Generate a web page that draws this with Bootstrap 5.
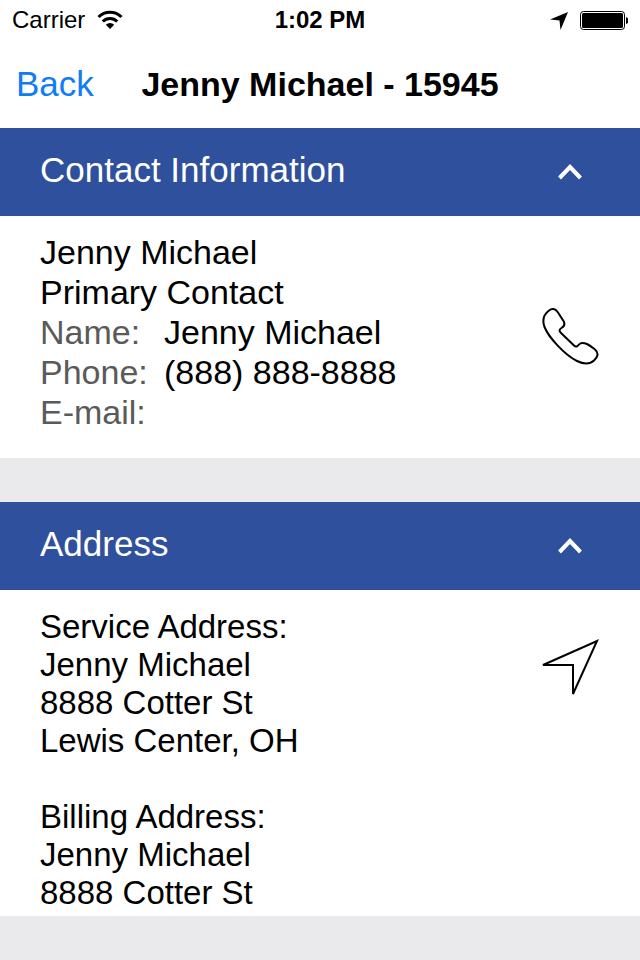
<!DOCTYPE html>
<html lang="en">
<head>
<meta charset="utf-8">
<meta name="viewport" content="width=device-width, initial-scale=1">
<title>Jenny Michael - 15945</title>
<link href="https://cdn.jsdelivr.net/npm/bootstrap@5.3.0/dist/css/bootstrap.min.css" rel="stylesheet">
<style>
  body { font-family: "Liberation Sans", Arial, sans-serif; font-size: 34px; line-height: 40px; color: #000; background: #eaeaec; }
  svg { display: block; flex: none; }
  .status-bar { height: 40px; font-size: 24px; line-height: 40px; padding: 0 12px; }
  .title-bar { height: 88px; padding: 0 16px; }
  .title-text { font-size: 34px; line-height: 40px; }
  .back-link { color: #107cf6; font-size: 35px; }
  .section-toggle { height: 88px; padding: 0 58px 4px 40px; background: #2f509c; color: #fff; border: 0; font-size: 35px; text-align: left; }
  .section-toggle svg { margin-top: 4px; }
  .contact-body { padding: 16px 40px 26px; }
  .contact-body .icon-button { margin-top: 8px; }
  .contact-label { width: 124px; color: #5a5a5a; }
  .address-body { padding: 18px 40px 4px; font-size: 33px; line-height: 38px; }
  .address-body .icon-button { margin-top: 31px; }
  .icon-button { background: none; border: 0; padding: 0; color: #000; }
  .section-gap { margin-top: 44px; }
</style>
<script src="https://cdn.jsdelivr.net/npm/bootstrap@5.3.0/dist/js/bootstrap.bundle.min.js" defer></script>
</head>
<body>
<header class="bg-white">
  <div class="status-bar d-flex align-items-center">
    <div class="col d-flex align-items-center gap-2">
      <span>Carrier</span>
      <svg class="ms-1" width="26" height="20" viewBox="0 0 26 20" aria-hidden="true">
        <g fill="none" stroke="#000" stroke-width="3"><path d="M1.500 7a16.200 16.200 0 0 1 23 0"/><path d="M5.800 11.500a10.200 10.200 0 0 1 14.400 0"/></g>
        <path d="M13 19l-4.200-4.300a6 6 0 0 1 8.400 0z"/>
      </svg>
    </div>
    <span class="fw-bold">1:02 PM</span>
    <div class="col d-flex align-items-center justify-content-end">
      <svg width="78" height="20" viewBox="0 0 78 20" aria-hidden="true">
        <path d="M0 9.500L18 2 10.500 20 9.500 10.500z"/>
        <rect x="30.500" y="1.500" width="44" height="18" rx="3" fill="none" stroke="#000"/>
        <rect x="32" y="3" width="41" height="15" rx="1.500"/>
        <path d="M76 7q2.500 1 2.500 3.500t-2.500 3.500z"/>
      </svg>
    </div>
  </div>
  <nav class="title-bar d-flex align-items-center" aria-label="Page">
    <div class="col"><a href="#" class="back-link text-decoration-none">Back</a></div>
    <h1 class="title-text fw-bold m-0">Jenny Michael - 15945</h1>
    <div class="col"></div>
  </nav>
</header>
<main>
  <section>
    <button type="button" class="section-toggle w-100 d-flex align-items-center justify-content-between" data-bs-toggle="collapse" data-bs-target="#contact" aria-expanded="true" aria-controls="contact">
      <span>Contact Information</span>
      <svg width="24" height="16" viewBox="0 0 24 16" aria-hidden="true"><path d="M1.500 14L12 3l10.500 11" fill="none" stroke="#fff" stroke-width="4"/></svg>
    </button>
    <div id="contact" class="collapse show bg-white">
      <div class="contact-body d-flex justify-content-between align-items-center">
        <div>
          <div>Jenny Michael</div>
          <div>Primary Contact</div>
          <div class="d-flex"><span class="contact-label">Name:</span><span>Jenny Michael</span></div>
          <div class="d-flex"><span class="contact-label">Phone:</span><span>(888) 888-8888</span></div>
          <div class="d-flex"><span class="contact-label">E-mail:</span></div>
        </div>
        <button type="button" class="icon-button" aria-label="Call">
          <svg width="60" height="60" viewBox="0 0 60 60" fill="none" stroke="#000" stroke-width="2" stroke-linejoin="round"><path d="M9 4.500C12 2 15.500 2.500 18 6.500L23.500 15C25.500 18.500 24 20.500 21.500 22C19 23.500 19 25 21 27L34 39.500C36 41.500 37.500 40.500 39 38.500C41 36 43.500 36.500 47 38C50 39.500 53 42 55 43.500C59 47 58 51 54 54.500C49 59 43 58 37 55C25 49 9 32 4.500 21C2 14 3 9 9 4.500Z"/></svg>
        </button>
      </div>
    </div>
  </section>
  <section class="section-gap">
    <button type="button" class="section-toggle w-100 d-flex align-items-center justify-content-between" data-bs-toggle="collapse" data-bs-target="#address" aria-expanded="true" aria-controls="address">
      <span>Address</span>
      <svg width="24" height="16" viewBox="0 0 24 16" aria-hidden="true"><path d="M1.500 14L12 3l10.500 11" fill="none" stroke="#fff" stroke-width="4"/></svg>
    </button>
    <div id="address" class="collapse show bg-white">
      <div class="address-body d-flex justify-content-between align-items-start">
        <div>
          <address class="mb-0">Service Address:<br>Jenny Michael<br>8888 Cotter St<br>Lewis Center, OH</address>
          <br>
          <address class="mb-0">Billing Address:<br>Jenny Michael<br>8888 Cotter St</address>
        </div>
        <button type="button" class="icon-button" aria-label="Get directions">
          <svg width="60" height="60" viewBox="0 0 60 60" fill="none" stroke="#000" stroke-width="2"><path d="M3 26L57 2 33 55V26Z"/></svg>
        </button>
      </div>
    </div>
  </section>
</main>
</body>
</html>
